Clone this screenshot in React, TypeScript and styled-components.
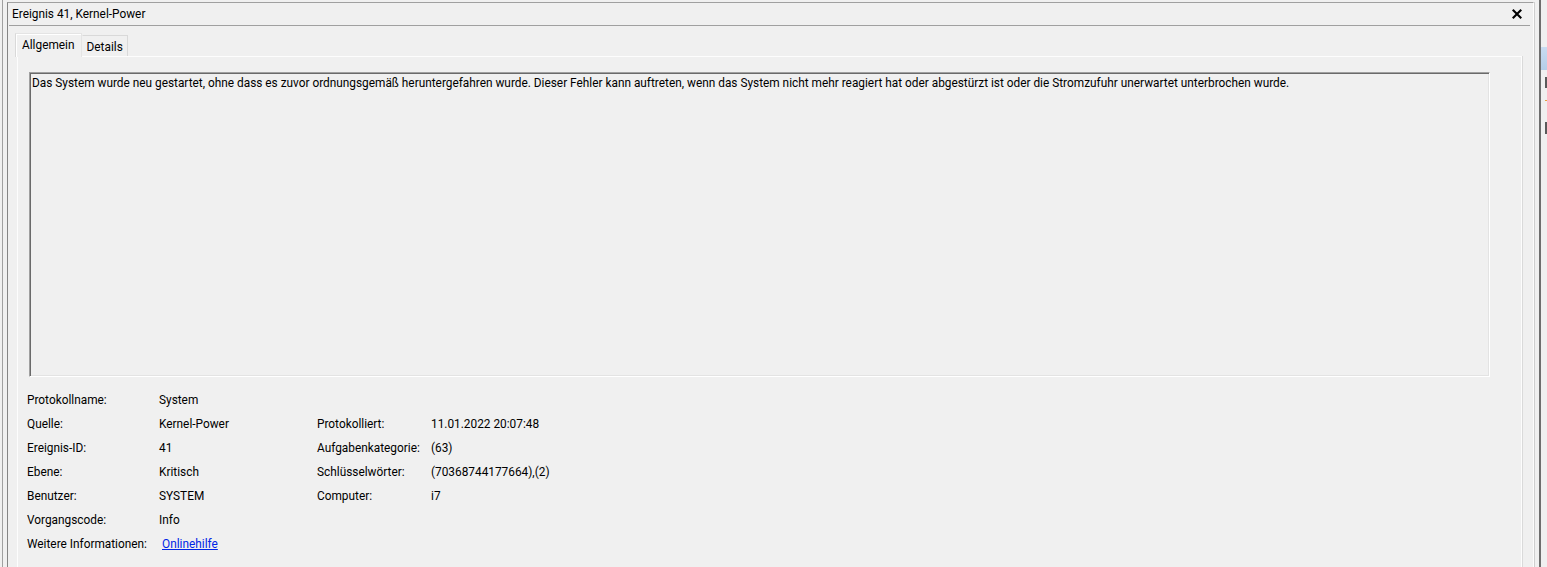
import React from 'react';
import styled, { createGlobalStyle } from 'styled-components';

const GlobalStyle = createGlobalStyle`
    html, body {
        margin: 0;
        padding: 0;
        background: #f0f0f0;
        overflow: hidden;
    }

    body {
        font-family: Roboto, 'Liberation Sans', sans-serif;
        font-size: 11.85px;
        color: #000;
    }

    * {
        box-sizing: border-box;
    }
`;

interface FieldRow {
    label: string;
    value: string;
    label2?: string;
    value2?: string;
    link?: boolean;
}

const fields: FieldRow[] = [
    { label: 'Protokollname:', value: 'System' },
    { label: 'Quelle:', value: 'Kernel-Power', label2: 'Protokolliert:', value2: '11.01.2022 20:07:48' },
    { label: 'Ereignis-ID:', value: '41', label2: 'Aufgabenkategorie:', value2: '(63)' },
    { label: 'Ebene:', value: 'Kritisch', label2: 'Schlüsselwörter:', value2: '(70368744177664),(2)' },
    { label: 'Benutzer:', value: 'SYSTEM', label2: 'Computer:', value2: 'i7' },
    { label: 'Vorgangscode:', value: 'Info' },
    { label: 'Weitere Informationen:', value: 'Onlinehilfe', link: true },
];

const description =
    'Das System wurde neu gestartet, ohne dass es zuvor ordnungsgemäß heruntergefahren wurde. Dieser Fehler kann auftreten, wenn das System nicht mehr reagiert hat oder abgestürzt ist oder die Stromzufuhr unerwartet unterbrochen wurde.';

function CloseIcon() {
    return (
        <svg width='10' height='10' viewBox='0 0 10 10'>
            <path d='M1.5 1.5 L8.5 8.5 M8.5 1.5 L1.5 8.5' stroke='#000' strokeWidth='2.1' strokeLinecap='square' />
        </svg>
    );
}

export default function App() {
    return (
        <>
            <GlobalStyle />
            <Screen>
                <Window>
                    <Pane>
                        <TitleBar>
                            <span>Ereignis 41, Kernel-Power</span>
                            <CloseButton aria-label='Schließen'>
                                <CloseIcon />
                            </CloseButton>
                        </TitleBar>

                        <Body>
                            <TabStrip>
                                <Tab $active>Allgemein</Tab>
                                <Tab>Details</Tab>
                            </TabStrip>

                            <TabPanel>
                                <DescriptionBox>{description}</DescriptionBox>

                                <FieldGrid>
                                    {fields.map((f) => (
                                        <React.Fragment key={f.label}>
                                            <Cell>{f.label}</Cell>
                                            <Cell>{f.link ? <HelpLink href='#'>{f.value}</HelpLink> : f.value}</Cell>
                                            <Cell>{f.label2 ?? ''}</Cell>
                                            <Cell>{f.value2 ?? ''}</Cell>
                                        </React.Fragment>
                                    ))}
                                </FieldGrid>
                            </TabPanel>
                        </Body>
                    </Pane>
                </Window>

                <Behind>
                    <Highlight />
                    <Mark $top={7} $height={11} />
                    <Mark $top={30} $height={1} $orange />
                    <Mark $top={52} $height={12} />
                </Behind>
            </Screen>
        </>
    );
}

const Screen = styled.div`
    display: flex;
    height: 567px;
    padding-left: 2px;
`;

const Window = styled.div`
    display: flex;
    width: 1539px;
    height: 100%;
    border-left: 1px solid #a0a0a0;
    border-right: 2px solid #6e6e6e;
    padding: 0 5px 0 4px;
`;

const Pane = styled.div`
    display: flex;
    flex-direction: column;
    flex: 1;
    margin-top: 2px;
    border-top: 1px solid #a0a0a0;
    border-left: 1px solid #858585;
    border-right: 1px solid #fdfdfd;
    box-shadow: 1px 0 0 #cfcfcf;
    overflow: hidden;
`;

const TitleBar = styled.div`
    display: flex;
    align-items: center;
    justify-content: space-between;
    height: 23px;
    margin: 0 3px 0 1px;
    padding: 0 8px 0 3px;
    border-bottom: 1px solid #a0a0a0;
`;

const CloseButton = styled.span`
    display: flex;
    align-items: center;
    justify-content: center;
    width: 10px;
    height: 10px;
    margin-top: -1px;
`;

const Body = styled.div`
    display: flex;
    flex-direction: column;
    flex: 1;
    padding: 7px 11px 0 7px;
`;

const TabStrip = styled.div`
    display: flex;
    align-items: flex-end;
    height: 23px;
`;

const Tab = styled.div<{ $active?: boolean }>`
    position: relative;
    z-index: ${({ $active }) => ($active ? 1 : 0)};
    display: flex;
    align-items: center;
    height: ${({ $active }) => ($active ? '24px' : '21px')};
    margin-bottom: ${({ $active }) => ($active ? '-1px' : '0')};
    padding: ${({ $active }) => ($active ? '0 6px 1px 6px' : '2px 4px 0 4px')};
    background: #f0f0f0;
    border: 1px solid ${({ $active }) => ($active ? '#e4e4e4' : '#d9d9d9')};
    border-bottom: none;
    border-left-color: ${({ $active }) => ($active ? '#d9d9d9' : 'transparent')};
    box-shadow: ${({ $active }) => ($active ? 'inset 1px 1px 0 #fff' : 'none')};
`;

const TabPanel = styled.div`
    display: flex;
    flex-direction: column;
    flex: 1;
    margin-left: 2px;
    border: 1px solid #fdfdfd;
    border-bottom: none;
    box-shadow: 1px 0 0 #dadada;
`;

const DescriptionBox = styled.div`
    height: 305px;
    margin: 15px 31px 0 11px;
    padding: 3px 2px;
    line-height: 15px;
    border-style: solid;
    border-width: 1px;
    border-color: #a0a0a0 #ffffff #ffffff #a0a0a0;
    box-shadow: inset 1px 1px 0 #6a6a6a, inset -1px -1px 0 #e3e3e3;
`;

const FieldGrid = styled.div`
    display: grid;
    grid-template-columns: 132px 158px 114px 1fr;
    grid-auto-rows: 24px;
    align-items: center;
    margin-top: 11px;
    padding-left: 9px;
    white-space: nowrap;
`;

const Cell = styled.div`
    line-height: 15px;
`;

const HelpLink = styled.a`
    margin-left: 3px;
    color: #0026e6;
    text-decoration: underline;
`;

const Behind = styled.div`
    position: relative;
    flex: 1;
    height: 100%;
`;

const Highlight = styled.div`
    margin-top: 47px;
    height: 23px;
    background: linear-gradient(#c9dcf1, #b5cde8);
`;

const Mark = styled.div<{ $top: number; $height: number; $orange?: boolean }>`
    position: absolute;
    top: ${({ $top }) => 70 + $top}px;
    right: 0;
    width: 2px;
    height: ${({ $height }) => $height}px;
    background: ${({ $orange }) => ($orange ? '#e8a040' : '#5a5a5a')};
`;
